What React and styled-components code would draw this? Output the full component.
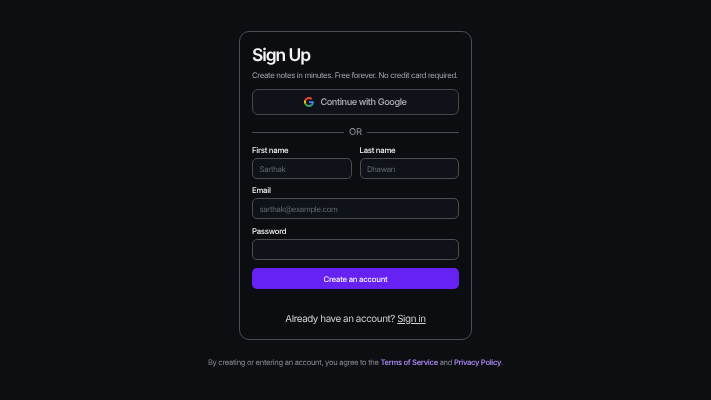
import React from 'react'
import styled, { createGlobalStyle } from 'styled-components'

const GlobalStyle = createGlobalStyle`
html, body {
  margin: 0;
  padding: 0;
  background: #0c0e12;
}
* { box-sizing: border-box; }
`
const Page = styled.div`
width: 711px;
height: 400px;
padding-top: 31px;
display: flex;
flex-direction: column;
align-items: center;
font-family: Inter, "Noto Sans", sans-serif;
text-rendering: geometricPrecision;
will-change: transform;
`
const Card = styled.div`
width: 233px;
height: 309px;
padding: 13px 12px 0;
border: 1px solid #4b4d52;
border-radius: 10px;
background: #0c0d11;
display: flex;
flex-direction: column;
`
const Title = styled.h1`
margin: 0;
height: 20px;
line-height: 21px;
font-size: 17.4px;
font-weight: 600;
letter-spacing: -1.05px;
color: #f5f5f6;
`
const Subtitle = styled.p`
margin: 5px 0 0;
height: 11px;
line-height: 11px;
font-size: 7.8px;
letter-spacing: -0.35px;
color: #a4a6ab;
white-space: nowrap;
`
const GoogleButton = styled.button`
margin-top: 8px;
height: 26px;
width: 100%;
display: flex;
align-items: center;
justify-content: center;
gap: 6px;
border: 1px solid #44474c;
border-radius: 6px;
background: #0f1319;
color: #b0b2b6;
font-family: inherit;
font-size: 9.2px;
font-weight: 500;
letter-spacing: -0.42px;
text-rendering: geometricPrecision;
`
const Divider = styled.div`
margin-top: 11px;
height: 12px;
display: flex;
align-items: center;
gap: 5px;
color: #94969b;
font-size: 9.4px;
`
const Line = styled.span`
flex: 1;
height: 1px;
background: #4b4d52;
`
const Row = styled.div`
margin-top: 6px;
display: grid;
grid-template-columns: 1fr 1fr;
gap: 8px;
`
const Field = styled.div`
margin-top: ${p => p.$top || 0}px;
display: flex;
flex-direction: column;
`
const Label = styled.label`
height: 13px;
line-height: 13px;
margin-bottom: 1px;
font-size: 7.8px;
font-weight: 500;
letter-spacing: -0.28px;
color: #f0f0f2;
`
const Input = styled.input`
width: 100%;
height: 21px;
padding: 0 6.5px;
border: 1px solid #4a4e52;
border-radius: 5px;
background: #0f1319;
color: #e6e6e8;
font-family: inherit;
font-size: 7.8px;
letter-spacing: -0.32px;
text-rendering: geometricPrecision;
outline: none;
&::placeholder { color: #636870; opacity: 1; }
`
const Submit = styled.button`
margin-top: 8px;
width: 100%;
height: 21px;
border: none;
border-radius: 5px;
background: #6522f2;
color: #f3eefe;
font-family: inherit;
font-size: 7.8px;
font-weight: 500;
letter-spacing: -0.25px;
text-rendering: geometricPrecision;
`
const Already = styled.p`
margin: 23.5px 0 0;
height: 14px;
line-height: 14px;
text-align: center;
font-size: 9.8px;
letter-spacing: -0.42px;
color: #d0d1d4;
`
const SignIn = styled.a`
color: #d0d1d4;
text-decoration: underline;
`
const Footer = styled.p`
margin: 17px 0 0;
height: 11px;
line-height: 11px;
font-size: 7.6px;
letter-spacing: -0.31px;
color: #85878c;
white-space: nowrap;
`
const Strong = styled.a`
color: #a183e8;
font-weight: 600;
`

function GoogleIcon() {
  return (
    <svg width="10" height="10" viewBox="0 0 48 48">
      <path fill="#EA4335" d="M24 9.5c3.5 0 6.7 1.2 9.2 3.6l6.9-6.9C35.9 2.4 30.5 0 24 0 14.6 0 6.5 5.4 2.6 13.2l8 6.2C12.5 13.7 17.8 9.5 24 9.5z" />
      <path fill="#4285F4" d="M46.98 24.55c0-1.57-.15-3.09-.38-4.55H24v9.02h12.94c-.58 2.96-2.26 5.48-4.78 7.18l7.73 6c4.51-4.18 7.09-10.36 7.09-17.65z" />
      <path fill="#FBBC05" d="M10.53 28.59c-.48-1.45-.76-2.99-.76-4.59s.27-3.14.76-4.59l-7.98-6.19C.92 16.46 0 20.12 0 24c0 3.88.92 7.54 2.56 10.78l7.97-6.19z" />
      <path fill="#34A853" d="M24 48c6.48 0 11.93-2.13 15.89-5.81l-7.73-6c-2.15 1.45-4.92 2.3-8.16 2.3-6.26 0-11.57-4.22-13.47-9.91l-7.98 6.19C6.51 42.62 14.62 48 24 48z" />
    </svg>
  )
}

export default function App() {
  return (
    <Page>
      <GlobalStyle />
      <Card>
        <Title>Sign Up</Title>
        <Subtitle>Create notes in minutes. Free forever. No credit card required.</Subtitle>
        <GoogleButton><GoogleIcon />Continue with Google</GoogleButton>
        <Divider><Line />OR<Line /></Divider>
        <Row>
          <Field>
            <Label>First name</Label>
            <Input placeholder="Sarthak" />
          </Field>
          <Field>
            <Label>Last name</Label>
            <Input placeholder="Dhawan" />
          </Field>
        </Row>
        <Field $top={5}>
          <Label>Email</Label>
          <Input placeholder="sarthak@example.com" />
        </Field>
        <Field $top={6}>
          <Label>Password</Label>
          <Input type="password" />
        </Field>
        <Submit>Create an account</Submit>
        <Already>Already have an account? <SignIn href="#">Sign in</SignIn></Already>
      </Card>
      <Footer>
        By creating or entering an account, you agree to the <Strong>Terms of Service</Strong> and <Strong>Privacy Policy</Strong>.
      </Footer>
    </Page>
  )
}
